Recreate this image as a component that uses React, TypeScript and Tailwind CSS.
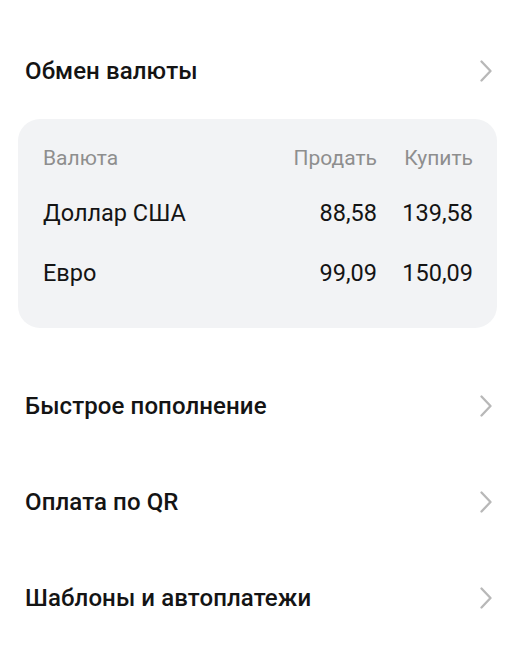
const RATES = [
  { name: "Доллар США", sell: "88,58", buy: "139,58" },
  { name: "Евро", sell: "99,09", buy: "150,09" },
];

const LINKS = ["Быстрое пополнение", "Оплата по QR", "Шаблоны и автоплатежи"];

function Chevron() {
  return (
    <svg width="14" height="22" viewBox="0 0 14 22" fill="none" className="text-[#b8b8b8]">
      <path d="M2.5 1.5l9 9.5-9 9.5" stroke="currentColor" strokeWidth="2.3" strokeLinecap="round" strokeLinejoin="round" />
    </svg>
  );
}

function MenuRow({ title }: { title: string }) {
  return (
    <div className="h-[96px] flex items-center justify-between pl-[25px] pr-[29px]">
      <span className="text-[24px] font-medium text-[#141414] tracking-[0.1px]">{title}</span>
      <Chevron />
    </div>
  );
}

export default function App() {
  return (
    <div className="w-[522px] h-[647px] bg-white overflow-hidden font-['Roboto','Liberation_Sans',sans-serif] pt-[23px]">
      <MenuRow title="Обмен валюты" />

      {/* Rates card */}
      <div className="ml-[18px] mr-[25px] h-[209px] rounded-[22px] bg-[#f2f3f5] pl-[25px] pr-[24px] pt-[15px]">
        <div className="h-[50px] flex items-center text-[21px] text-[#8e8e8e]">
          <span className="flex-1">Валюта</span>
          <span className="text-right">Продать</span>
          <span className="w-[96px] text-right">Купить</span>
        </div>
        {RATES.map((r) => (
          <div key={r.name} className="h-[60px] flex items-center text-[23.5px] text-[#141414]">
            <span className="flex-1">{r.name}</span>
            <span className="text-right">{r.sell}</span>
            <span className="w-[96px] text-right">{r.buy}</span>
          </div>
        ))}
      </div>

      <div className="mt-[30px]">
        {LINKS.map((l) => (
          <MenuRow key={l} title={l} />
        ))}
      </div>
    </div>
  );
}
